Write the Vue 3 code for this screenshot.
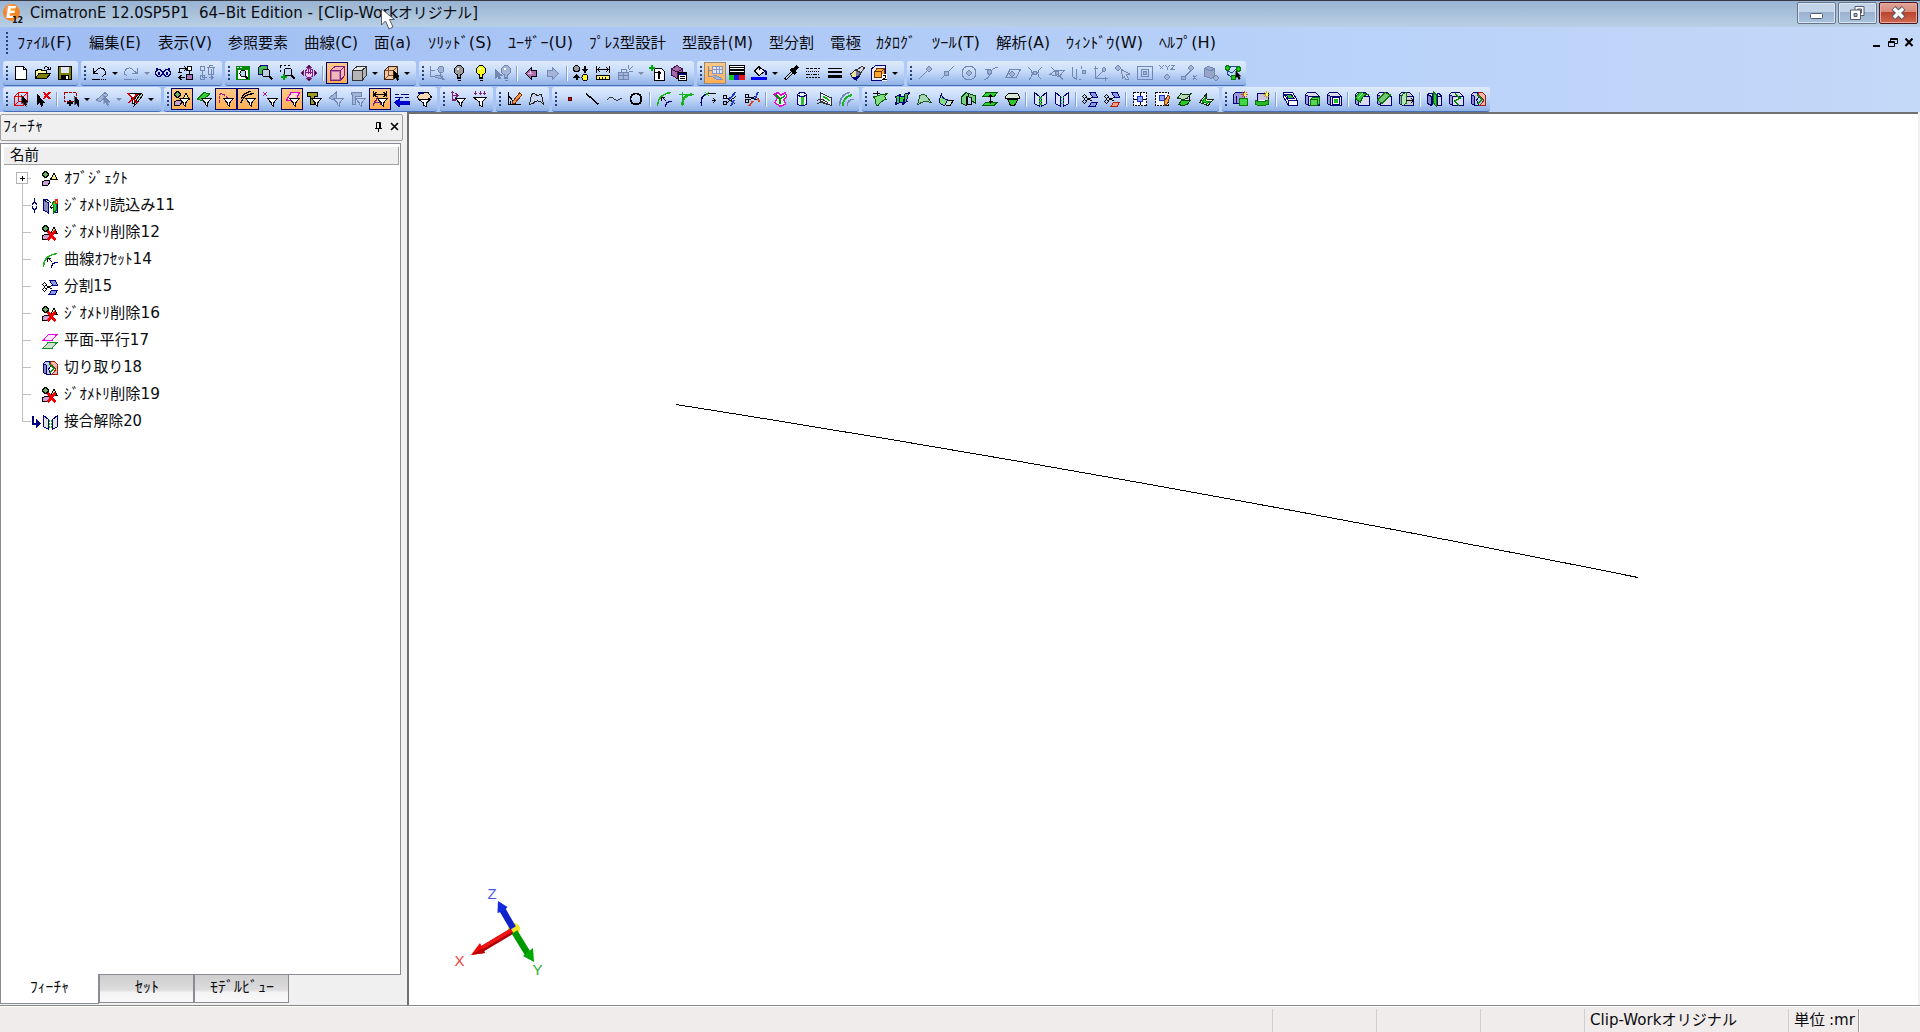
<script setup>
const P = (d, s = '#000', f = 'none', w = 1) => `<path d="${d}" stroke="${s}" fill="${f}" stroke-width="${w}"/>`
const R = (x, y, w, h, f, s = 'none') => `<rect x="${x}" y="${y}" width="${w}" height="${h}" fill="${f}" stroke="${s}"/>`
const C = (x, y, r, f = 'none', s = '#000', w = 1) => `<circle cx="${x}" cy="${y}" r="${r}" fill="${f}" stroke="${s}" stroke-width="${w}"/>`
const N = '#00007c', G = '#18b41c', L = '#7fe07f', K = '#000', M = '#7d1f7d', D = '#7288b4', E = '#a3b4d6', B = '#8a9be0'

const funnel = P('M5.500 7.500H15.500L11.500 12V15.500L9.500 13.500V12Z', K, '#fff')
const dimFunnel = P('M5.500 7.500H15.500L11.500 12V15.500L9.500 13.500V12Z', D, '#c3d2ee')
const pointer = P('M8.500 4V13L10.500 11L12.500 15L14 14L12.500 11H15Z', K, K, 0.5)
const scissor = (c1, c2) => C(2.5, 5.5, 1.8) + C(2.5, 10.500, 1.8) + P('M4 6.500L10 10M4 9.500L10 6.500') +
  P('M7.500 1.500H13L15.500 6H10.500Z', N, c1) + P('M7 15.500L9.500 11.500H15.500L13 15.500Z', c2 === B ? N : '#b02010', c2)
const ortho = (a = '#dcdcec') => P('M1.500 3.500V12.500L4.500 14.500V5.500Z', N, '#9a9ed4') + P('M1.500 3.500L3.500 1.500H11.500L15.500 5.500V14.500H4.500V5.500Z', N, a) + P('M1.500 3.500L4.500 5.500H15.500', N)
const bulb = (f, s = K) => C(8, 5.5, 4.8, f, s) + P('M6.500 10V13.500H9.500V10M6.500 12H9.500M7 15.500H9.500', s, f) + R(6, 3, 2, 2, '#fff')
const shapes = C(3.5, 3.5, 2.8, '#69b35c') + P('M8.500 8.500L12 2.500L15.500 8.500Z', K, '#f5ea7a') + P('M.500 13.500V11L2.500 9.500H7.500V12L5.500 14.500H.500Z', K, '#c9a0d8')
const sheet = (x, f = '#dfe4f4') => P(`M${x} 1.500L${x + 5} 5.500V15.500L${x} 12.500Z`, N, f)
const sheetR = (x, f = '#dfe4f4') => P(`M${x + 5} 1.500L${x} 5.500V15.500L${x + 5} 12.500Z`, N, f)

const icons = {
  new: P('M2.500 1.500H10.500L13.500 4.500V14.500H2.500ZM10.500 1.500V4.500H13.500', K, '#fff'),
  open: P('M.500 13.500V5.500H2L3 4.500H6L7 5.500H11.500V8', K, '#fffba0') + P('M.500 13.500L4 8.500H15.500L11.500 13.500Z', K, '#808000') + P('M9 3.500C10 1 13 1 14.500 4.500M12 4.500H15V2'),
  save: R(1.5, 1.5, 13, 13, '#808000', K) + R(4, 2, 8, 6, '#dfe8f8') + R(4, 10, 8, 5, K) + R(9, 11, 2, 3, '#fff'),
  undo: P('M2 3V8.500H7M2.500 8L7 4C10 1.500 15 4 14.500 9L11.500 11.500') + P('M1 14.500H9') + P('M10 14.500H16').replace('/>', ' stroke-dasharray="1 1"/>'),
  redo: P('M14 3V8.500H9M13.500 8L9 4C6 1.500 1 4 1.500 9L4.500 11.500', D) + P('M1 14.500H9', D) + P('M10 14.500H16', D).replace('/>', ' stroke-dasharray="1 1"/>'),
  glasses: C(4, 8, 3.4, '#c9d6f4', N, 1.2) + C(12, 8, 3.4, '#c9d6f4', N, 1.2) + P('M1 5Q1 3 3 3.500M15 5Q15 3 13 3.500', N) + R(3, 7, 2, 3, N) + R(11, 7, 2, 3, N),
  sync: P('M2.500 8V3.500H9M7 1L9.500 3.500L7 6M1 7H5M9.500 3.500V6M2.500 12.500H8M4.500 10L2 12.500L4.500 15') + R(9.5, 9.5, 6, 5, '#b070b8', K) + R(10.5, 1.5, 4, 4, '#fff', K) + P('M12.500 6V9'),
  treedel: P('M1.500 1.500H5.500V5.500H1.500ZM3.500 6V12.500H8M1.500 10.500H5.500V14.500H1.500ZM9.500 12.500H14M12 10.500L14 12.500L12 14.500M8 2.500H16M10.500 2V.500H13.500M9.500 3V9.500H14.500V3M12 4V9', D),
  fit: R(1, 1, 14, 14, '#00890a') + R(3, 4.500, 10, 9.500, '#fff') + R(2, 2, 2, 1, '#fff') + R(5, 2, 2, 1, '#fff') + C(8, 8.500, 3, '#b9d8f0', K) + P('M10 11L13 14', K, 'none', 1.5),
  zoomwin: P('M1.500 2.500L4 .500H10.500V7L8 9.500H1.500Z', N, '#40c048') + C(9, 8, 4, '#b8cfe8', K) + P('M12 11L15.500 14.500', K, 'none', 2),
  zoomin: P('M1 .500H12M1.500 1V8', K).replace('/>', ' stroke-dasharray="2 2"/>') + C(9, 7, 4, '#c3d6f4', K) + P('M12 10L15.500 14', K, 'none', 2) + P('M5 9V15M2 12H8', '#00a010', 'none', 2),
  pan: P('M8 0L10.500 2.500H5.500ZM8 16L10.500 13.500H5.500ZM0 8L2.500 5.500V10.500ZM16 8L13.500 5.500V10.500Z', M, K) + P('M5.500 5Q5.500 3.500 8 3.500Q11.500 3.500 11.500 6V10.500Q11 12.500 8 12.500Q5 12.500 4.500 10V6Z', M, '#f7c6f0') + P('M7 4V9M9 4V9M5 7H11', M),
  cubeA: P('M1.500 5.500L6 1.500H15.500V10.500L11.500 15.500H1.500Z', M, '#f0b8b8') + P('M1.500 5.500H11.500V15M11.500 5.500L15.500 1.500', M) + P('M2.500 6.500H10.500V14.500H2.500Z', '#b878a8'),
  cubeG: P('M1.500 5.500L6 1.500H15.500V10.500L11 15.500H1.500Z', '#333', '#b5b5b5') + P('M1.500 5.500L6 1.500H15.500L11 5.500Z', '#333', '#e8e8e8') + P('M11.500 5.500V15', '#333'),
  cubeP: P('M1.500 5.500L5.500 1.500H14.500V10.500L10.500 14.500H1.500Z', '#402010', '#efc8a2') + P('M1.500 5.500H10.500V14.500M10.500 5.500L14.500 1.500M5.500 2V10.500H14M5.500 10.500L1.500 14.500', '#804828') + `<g transform="translate(2 1)">${pointer}</g>`,
  treehide: P('M1.500 1V11.500H6M1.500 5.500H6', D) + C(12, 4.5, 3, E, D) + P('M11 8V11H14M5 11.500Q10 8 15 14.500L9 13Z', D, E),
  bulbOff: bulb('#9a9a9a'), bulbOn: bulb('#ffff1c'),
  bulbPick: `<g transform="translate(3 0)">${bulb(E, D)}</g>` + P('M.500 5V13L2.500 11L4 14L5.500 13L4.500 10.500H7Z', D, D),
  left: P('M2.500 8.500L8.500 2.500V5.500H13.500V11.500H8.500V14.500Z', K, '#b070b0') + P('M5 8.500H9M7.500 6V8', '#f0c8e8'),
  right: P('M13.500 8.500L7.500 2.500V5.500H2.500V11.500H7.500V14.500Z', D, E),
  swap: C(3.5, 3.5, 3, '#999') + C(12, 12.5, 3, '#ffff20') + P('M12 1V4M3.500 15V12', K, 'none', 2) + P('M9.500 4.500H14.500L12 7.500ZM1 12.500H6L3.500 9.500Z', K, K),
  measure: P('M1.500 1V8M14.500 1V8M2 4.500H14M5 2L2.500 4.500L5 7M11 2L13.500 4.500L11 7') + R(1.5, 10.5, 13, 4, '#fff36a', K) + P('M4.500 12V14M7.500 12V14M10.500 12V14'),
  explode: R(1.5, 7.5, 10, 7, E, D) + P('M1.500 10.500H11.500M6.500 7V14M4 7V4.500H9V7M11 4L12 0M12 5L16 1M12 6.500H16', D),
  docadd: P('M5.500 3.500H12.500L15.500 6.500V15.500H5.500Z', K, '#fff') + R(9, 6, 2, 8, K) + P('M6 7.500H11L12 9', K, K) + P('M3 0V6M0 3H6', '#00a010', 'none', 2),
  cubelist: P('M.500 4L6 .500L11.500 4V10L6 13.500L.500 10Z', '#401040', '#a468ac') + P('M.500 4L6 7L11.500 4M6 7V13', '#401040') + R(7.5, 7.5, 8, 8, '#fff', K) + P('M9 11.500H14M9 13.500H14') + R(8, 8, 7, 2, N),
  treetable: P('M1.500 1V11.500H6M1.500 5.500H5', '#8d8490') + P('M5.500 1.500H15.500V8.500H5.500ZM5.500 4.500H15.500M9 2V8M12 2V8', '#8796c2', '#dfe4f5') + P('M5 11.500Q9 8.500 15 14.500L9 14Z', '#8796c2', '#a5b2d8'),
  lines: R(.5, .5, 15, 9, '#fff', K) + R(1, 2, 14, 1, K) + R(1, 4, 14, 2, K) + R(1, 7, 14, 2, K) + R(0, 10, 5, 5, '#18c818') + R(5, 10, 5, 5, '#1717e8') + R(10, 10, 6, 5, '#e81818'),
  bucket: P('M3.500 6L8 1.500L13.500 6.500L8 10.500Z', K, '#f2f2f6') + P('M8 1V5', K) + P('M12 5Q15.500 6 15 10', N, 'none', 2) + R(0, 12, 16, 3, '#0000f8'),
  dropper: P('M2 14.500L10 6.500', K, 'none', 3) + P('M3 13.500L9 7.500', '#b8d8f0') + P('M8 4L13 9M10 6L14.500 1.500', K, 'none', 3),
  dash: P('M1 3.500H15', K).replace('/>', ' stroke-dasharray="3 1"/>') + P('M1 6.500H15', K).replace('/>', ' stroke-dasharray="1 1"/>') + P('M1 9.500H15', K).replace('/>', ' stroke-dasharray="4 1 1 1"/>') + P('M1 12.500H15', K).replace('/>', ' stroke-dasharray="2 1"/>'),
  weight: R(1, 3, 14, 1, K) + R(1, 6, 14, 2, K) + R(1, 10, 14, 3, K),
  brush: P('M1.500 9L7 4.500L12 9L7.500 15Q3 14 1.500 9', '#333', '#ece19a') + P('M7 12L12 9L7 4.500', '#333', '#777ba0') + P('M8 5L13 1L15.500 3L11.500 8Z', '#333', '#d8d8e0') + P('M3 12L7 15L11 11', N, N),
  layer: P('M.500 4L4.500 .500H14.500V11L11 15.500H.500Z', N, '#e8ecff') + P('M3.500 6.500L6 3.500H13.500V9.500L11 12.500H3.500Z', '#6d3500', '#ffa92e') + P('M3.500 6.500H10.500V12M10.500 6.500L13.500 3.500', '#6d3500') + R(11, 9, 5, 7, '#fff') + P('M11.500 10.500H14.500V12.500L12 14.500H15.500', K),
  sEnd: P('M1.500 14.500L10 6', D) + C(12, 4, 2.3, E, D), sMid: P('M1.500 14.500L14.500 1.500', D) + C(7.5, 8.5, 2.3, E, D),
  sCen: C(8, 8, 7, 'none', D) + C(8, 8, 2.2, E, D), sTan: P('M1 14.500Q6 14 7 8Q9 3 15 2.500', D) + C(6.500, 7, 2.2, E, D) + P('M2 4.500H8', D),
  sPl: P('M1 12.500L5 4.500H15.500L11 12.500Z', D) + C(7, 9, 2.2, E, D), sInt: P('M1 2Q9 8 2 14.500M15 2Q7 8 14.500 14.500', D) + C(8, 8, 2, E, D),
  sPier: P('M1 9.500L6 5.500H15.500L10 11.500Z M2 2L14 14.500', D) + C(8, 8, 2, E, D), sLoc: P('M1.500 1.500V11.500L5.500 14.500V3.500M8 14.500H10', D) + C(13, 7, 2, E, D) + P('M10 1V4', D),
  sAx: P('M2.500 1V13.500H15M2.500 13.500L11 5M.500 3.500H4.500M12.500 11.500V15.500', D) + C(11, 4.5, 1.8, E, D), sPick: C(3, 3, 2.2, E, D) + P('M6.500 4.500L14.500 9L11.500 10L13.500 14L11 15L9.500 11.500L7.500 13Z', D, '#c4d2ee'),
  sBox: R(.5, 1.5, 15, 13, 'none', D) + R(4.5, 4.5, 7, 7, 'none', D) + C(8, 8, 1.7, E, D),
  sXyz: P('M.500 .500L4.500 4.500M4.500 .500L.500 4.500M6.500 .500L8.500 2.500L10.500 .500M8.500 2.500V5M12 .500H15.500L12 4.500H16', D) + C(8, 12, 2.2, E, D),
  sPct: P('M2 13.500L12 3.500M12 10L15.500 15M15.500 10L12 15', D) + C(10, 3, 2.2, E, D) + C(2.5, 13, 2, E, D), sSol: P('M1.500 3.500L5 1.500L11.500 3.500V11L8 13.500L1.500 11Z', D, '#96a5c8') + P('M1.500 3.500L8 6L11.500 3.500', D) + C(13, 13, 2.2, E, D),
  snapAll: P('M3 6Q1 9 5 11L8 12M4 3Q9 -1 13 3M3 6L7 8L12 3', '#174fa8') + C(2.5, 3, 2.2, '#20c820', '#087808') + C(13.5, 4, 2.2, '#20c820', '#087808') + C(8.5, 12.5, 2.2, '#20c820', '#087808') + `<g transform="translate(4 2.5) scale(.8)">${pointer}</g>`,

  selbox: P('M1.500 5.500L5.500 1.500H14.500V10.500L10.500 14.500H1.500ZM1.500 5.500H10.500V14.500M10.500 5.500L14.500 1.500M5.500 2V10.500L1.500 14.500M5.500 10.500H14', '#e80000') + pointer,
  desel: P('M2.500 4V13L4.500 11L6.500 15L8 14L6.500 11H9Z', K, K) + P('M8.500 1L15 8M15 1L8.500 8', '#e80000', 'none', 2),
  marquee: P('M1.500 1.500H13.500V10.500H1.500Z', '#a00000').replace('/>', ' stroke-dasharray="3 1"/>') + P('M7 9V15M4 12H10', K, 'none', 2) + `<g transform="translate(3 1)">${pointer}</g>`,
  dimpick: P('M1.500 9L10 1.500L13 4L5 11Z', D, E) + pointer.replaceAll(K, D),
  nofilter: P('M1 2.500H12L7.500 8V13L5.500 12V8Z', K, '#fff') + P('M14 2L16 4L9 13L7 15L7.500 12Z', K, '#b8d8b8') + P('M1 2L10 12M10 3L2 12', '#d00000', 'none', 1.6),
  fObj: shapes + funnel,
  fFace: P('M1.500 8L8 1.500L13.500 3L6 10Z', '#087808', '#35d035') + funnel, fCurve: P('M1.500 12V3.500Q4 1 7.500 5.500L14 10', '#a02090', 'none', 1.4).replace('/>', ' stroke-dasharray="3 1"/>') + funnel,
  fEdge: P('M1 12Q4 3 14 2.500M1 8Q4 1 11 .500', K, 'none', 1.3) + funnel,
  fPoint: P('M1 1L5 5M5 1L1 5', '#a02090') + funnel, fPlane: P('M2.500 9.500L7 1.500H15.500L12 9.500Z', '#e000d0', '#ffe0d0', 1.3) + funnel,
  fText: P('M1.500 1.500H11.500V5.500H8.500V13.500H4.500V5.500H1.500Z', K, '#9c9c20') + funnel, fDimA: P('M1 7L8 1.500V10Z', D, E) + dimFunnel, fDimB: P('M1.500 1.500H11.500V5.500H5.500V13.500H2.500V5.500Z', D, E) + dimFunnel,
  fMeas: P('M1.500 0V6M14.500 0V6M2 3.500H14M4.500 1L2 3.500L4.500 6M11.500 1L14 3.500L11.500 6') + P('M1 14.500L5.500 6.500L9 14M3 11.500H8', M, 'none', 1.4) + funnel,
  fLayer: P('M1 3.500H5M7 3.500H15M1 6.500H9M11 6.500H15', N, 'none', 1.5) + P('M.500 11.500L5 8V10H15.500V13.500H5V15.500Z', '#0000c0', '#0000d8'),
  fHand: P('M1.500 5.500L5 1.500H12L15.500 6L12 8H6L3 9Z', K, '#f8d8b0') + P('M3 8.500H14L10 12.500V15.500L7.500 14V12Z', K, '#fff') + P('M2 2H8', N, 'none', 1.5),
  fTree: P('M2.500 1V9H6M2.500 4.500H7M.500 2.500L2.500 .500L4.500 2.500M5 2L8 4.500L5 7', M, 'none', 1.3) + funnel,
  fRain: P('M3.500 0V4M8.500 0V4M12.500 0V4M2 2.500H5M7 2.500H10M11 2.500H14', M) + P('M1.500 6.500H14.500L10 11V15.500L7.500 14V11Z', K, '#fff'),
  sketch: P('M2.500 1V13.500H15M2.500 5L10.500 13.500M4.500 9.500V13', K) + P('M7 10L13.500 2L16 4L9 12L6.500 12.500Z', '#803010', '#f29a42'),
  curve3: P('M1.500 13.500L3.500 4Q6 1 9 4.500L13.500 3.500L15.500 13Q9 7 5 12.500Z', '#222', '#c6d6f0'),
  point: R(6, 6, 4, 4, '#500000') + R(7, 7, 2, 2, '#e00000'), line: P('M2 2.500L14.500 13.500', K, 'none', 1.5), spline: P('M.500 9.500Q4 4 8 8Q11 11 15.500 7', '#333'), circle: C(8, 8, 5.5, 'none', K, 1.8),
  offset: P('M1.500 15Q2 3 15.500 1.500', G, 'none', 1.5) + P('M9.500 15.500Q9.500 10.500 15.500 10.500', N, 'none', 1.4) + P('M10.500 10.500L6 6M5.500 9.500V6.500H9'),
  fillet: P('M1 3.500H16M4.500 1V15', G) + P('M4.500 14Q4 4 14 3.500', G, 'none', 2.4), extend: P('M1.500 15Q0 4 7 3', N, 'none', 1.5) + P('M7 2.500H16M12 9.500H15M13 7L15.500 9.500L13 12', K) + P('M5 1L9 5M9 1L5 5', G),
  trim: C(3, 6, 2) + C(3, 12, 2) + P('M5 7L13 12.500M5 11.500L14 5.500') + P('M13 1Q11 6 7 8M12 9L9 15', '#183fd0', 'none', 1.8), split: C(3, 5, 2) + C(3, 10, 2) + P('M5 6L13 9M5 9L12 5') + P('M14 1L11 8', '#183fd0', 'none', 1.8) + P('M9 10L5 15M14 7L15 11', '#e04020', 'none', 1.8),
  comp: P('M2 3.500L6 1.500L9 4L13 2L15 5L12 9L13.500 13L8 15.500L3 11.500L5 7Z', '#e010d0', '#ddffdd', 1.4) + P('M4 4L8 8V13M8 8L13 5', '#009010', 'none', 1.5), cyl: P('M3.500 3.500Q8 -1 12.500 3.500V13Q8 17 3.500 13Z', N, '#eef4ff') + R(7, 5, 3, 9, '#29c42d') + P('M3.500 4Q8 7 12.500 4', N),
  proj: P('M4.500 2L15.500 7V14.500L4.500 10Z', '#333', '#e8eefc') + P('M1 9.500Q5 6 12 12M1 13Q6 10 12 14', '#333') + P('M7 6Q10 6 13 10', '#10b010', 'none', 1.5), par: P('M1.500 15Q2 3 12 1.500', D, 'none', 1.5) + P('M5 15Q5 6 14 4', G, 'none', 2) + P('M9.500 15Q9 9 15.500 8', D, 'none', 1.5),
  sf1: P('M1.500 6L8 4L15 2.500Q11 6 14.500 8.500Q10 9 6 14.500Q3 14 4 11Q4 8 1.500 6', '#0a5c0a', L) + P('M1 2H8M5 0V4'), sf2: P('M1.500 5.500Q4 5 6.500 3.500Q5 8 6 11.500L1.500 13.500Q3 9 1.500 5.500ZM6 5H10V11H6M10 3.500L15.500 1.500Q12 7 13 10.500L8 14Q11 9 10 3.500', N, '#35d035'),
  sf3: P('M1.500 14L4 4.500Q8 2 10.500 5L15.500 12Q9 8 1.500 14', '#20552c', '#a6d8b0'), sf4: P('M3.500 2.500Q4 8 9.500 9L7 14.500Q0 13 1.500 9Z', N, L) + P('M10 9L15.500 9.500L12 14.500H7.500', K, '#c5e6d5'),
  sf5: P('M1.500 6L6 1.500L15.500 5V12L11.500 10V7L6 5V14.500L1.500 12Z', '#0a400a', '#79cf80') + P('M6 5.500V14.500M8.500 3L7 13H11V7', K), sf6: P('M1 5.500L4 1.500H15.500L12 5.500ZM1 14.500L4 11H15.500L12 14.500Z', '#075c07', '#2fd02f') + P('M8.500 4V13M6.500 6L8.500 4L10.500 6M6.500 10H10.500'),
  sf7: P('M1.500 5.500L4.500 2.500H13.500L15.500 5.500V7.500H1.500Z', K, '#d5e8d5') + P('M3.500 8L6.500 14.500H10.500L14 8Z', K, '#28c828'),
  join1: sheet(2.5) + sheetR(9.5) + P('M8.500 6V15', G, 'none', 3).replace('/>', ' stroke-dasharray="2 1"/>'), join2: sheet(1.5) + sheetR(9.5) + P('M7.500 6V15M9.500 6V15', G).replace('/>', ' stroke-dasharray="1 2"/>'),
  cutB: scissor(B, B), cutR: scissor(B, '#ff9c80'),
  frame1: P('M1.500 1.500H14.500V14.500H1.500Z', K, '#f8fbff').replace('/>', ' stroke-dasharray="2 1"/>') + P('M8 2V14M2 8H14', K) + R(5.5, 5.5, 5, 5, '#91a6ff', '#1a30c8'), frame2: P('M1.500 1.500H14.500V14.500H1.500Z', K, '#f8fbff').replace('/>', ' stroke-dasharray="2 1"/>') + R(5.5, 4.5, 5, 5, '#91a6ff', '#1a30c8') + P('M10 15V11L14 4L16 6L13 13Z', '#803010', '#f5a840'),
  sf8: P('M1.500 7L5 2.500Q9 5 14.500 3L11 7.500Q6 9 1.500 7', '#0a400a', '#b8d8b8') + P('M2.500 13.500L6 9Q10 11 15 9L11 13.500Q7 15 2.500 13.500', '#0a400a', '#28c828') + P('M13.500 5V9'), sf9: P('M1.500 11.500L8.500 2.500V8L15.500 8.500L10 14.500Z', '#142814', '#e9f4e9') + P('M4 11L7.500 6V10L12 10.500L9.500 12.500Z', '#0a800a', '#28c828'),
  newsol: P('M1.500 3.500L3.500 1.500H12V12H1.500ZM4.500 5V12.500', N, '#9e98d8') + R(7.5, 7.5, 8, 7, '#40d840', '#087808') + P('M12.500 0V7M9 3.500H16M10 1L15 6M15 1L10 6', '#d83000', 'none', 0.8) + R(12, 2, 2, 3, '#ffff40'), newrev: P('M3 2.500H14.500V12H3Z', N, '#c9c2e0') + P('M1 9.500Q8 12 14.500 9V13Q7 17 1 13Z', '#087808', '#28b828') + P('M5 9H11', '#fff') + P('M12.500 0V7M9 3.500H16M10 1L15 6M15 1L10 6', '#b89800', 'none', 0.8) + R(12, 2, 2, 3, '#ffff40'),
  b1: P('M1.500 1.500H10.500L15.500 9.500V14.500H6.500L1.500 6Z', N, '#fff') + P('M3.500 3H9L12 7.500H6.500Z', N, '#28c828') + P('M1.500 2.500L6.500 9.500H15.500M6.500 9.500V14.500', N), b2: ortho() + P('M6.500 8.500L8.500 6.500H15.500V12.500L13.500 14.500H6.500Z', '#0a680a', '#54d854') + P('M6.500 8.500H13.500V14', '#0a680a'), b3: ortho() + R(6.5, 6.500, 7, 7, '#fff', N) + R(8, 8, 4, 4, '#20b820'),
  r1: ortho() + P('M1.500 7Q3 2 7 1.500L13 3.500Q8 5 6.500 11Q3 10 1.500 7', '#0a680a', '#35c435') + P('M4 7L9 2', '#a8f0a8'), r2: ortho() + P('M1.500 9L9 1.500L14.500 4L6 12.500Z', '#087808', '#74c574'), r3: ortho('#ccc') + P('M3.500 13V5Q5 2 8.500 1.500V12L5 14.500', '#087808', '#b8e0b8') + P('M8 9.500H15M13 7L15.500 9.500L13 12'),
  c1: P('M1.500 3.500L5.500 5.500V14.500L1.500 12.500Z', N, '#8a8ac8') + R(11.500, 5.500, 4, 9, '#d8d8e8', N) + P('M7.500 1L10.500 4V15.500L7.500 12Z', '#087808', '#28c828') + P('M1.500 3.500L3 2.500H6.500V14M11 5V2.500H13L15.500 5', N), c2: ortho() + P('M7 3L12 7L7 10L11 14.500', '#008a00', 'none', 1.5),
  c3: P('M1.500 3.500L3.500 1.500H7.500L9 6L6.500 9L9 14.500H4.500L1.500 12.500Z', N, '#c8ccec') + P('M1.500 3.500L4.500 5.500V14.500L1.500 12.500Z', N, '#8888c8') + P('M8.500 1.500H12.500L15.500 4.500V14.500H10L14 9L8.500 4Z', '#a02018', '#f4b8aa') + P('M7 3.500L12 8.500L7.500 13.500', '#009000', 'none', 1.4),
  objs: shapes, del: shapes + P('M5.500 6L13.500 15M13.500 6L5.500 15', '#f00000', 'none', 3),
  read: P('M1.500 1.500L6.500 5V15L1.500 12Z', N, '#8a8fc0') + P('M2 1.500H5L9 5', N) + R(12.5, 5.5, 3, 9, '#c8c8e0', N) + P('M9 9H13M10.500 6.500L8 9L10.500 11.500') + P('M10.500 5L14.500 1.500V12L11.500 15V9Z', '#087808', '#30c830') + R(13, 1, 3, 5, '#f02020') + R(14, 3, 1, 2, '#ffe000'),
  planes: P('M1 7.500L6.500 1.500H15L10 7.500Z', '#f000e8', '#ffe8fb') + P('M1 15.500L6 9.500H15L10 15.500Z', '#089020', '#d5dcd5'),
  unjoin: sheet(1.5, '#e4e4e4') + sheetR(10.5, '#e4e4e4') + P('M7.500 6V15M9.500 6V15', '#00b000').replace('/>', ' stroke-dasharray="2 1"/>')
}

// '|' is a separator, 'v' a drop-down arrow, '*' marks a pressed button, '~' a dimmed one
const bars = [
  [
    { w: 75, items: 'new open save' },
    { w: 141, items: 'undo v redo ~v glasses sync treedel' },
    { w: 191, items: 'fit zoomwin zoomin pan | *cubeA cubeG v cubeP v' },
    { w: 275, items: 'treehide bulbOff bulbOn bulbPick | left right | swap measure explode ~v docadd cubelist' },
    { w: 207, items: '*treetable lines bucket v dropper dash weight brush layer v' },
    { w: 339, items: 'sEnd sMid sCen sTan sPl sInt sPier sLoc sAx sPick sBox sXyz sPct sSol snapAll' }
  ],
  [
    { w: 158, items: 'selbox desel | marquee v dimpick ~v nofilter v' },
    { w: 273, items: '*fObj fFace *fCurve *fEdge fPoint *fPlane fText fDimA fDimB *fMeas fLayer fHand' },
    { w: 53, items: 'fTree fRain' },
    { w: 53, items: 'sketch curve3' },
    { w: 307, items: 'point line spline circle | offset fillet extend trim split | comp cyl proj par' },
    { w: 357, items: 'sf1 sf2 sf3 sf4 sf5 sf6 sf7 | join1 join2 | cutB cutR | frame1 frame2 sf8 sf9' },
    { w: 268, items: 'newsol newrev | b1 b2 b3 | r1 r2 r3 | c1 c2 c3' }
  ]
].map(row => row.map(g => ({ w: g.w, items: g.items.split(' ') })))

const bare = t => t.replace(/^[*~]/, '')

const menuRaw = [
  ['ﾌｧｲﾙ(F)', 17, 55], ['編集(E)', 89, 52], ['表示(V)', 158, 54], ['参照要素', 228, 60], ['曲線(C)', 304, 54], ['面(a)', 374, 37],
  ['ｿﾘｯﾄﾞ(S)', 428, 64], ['ﾕｰｻﾞｰ(U)', 508, 65], ['ﾌﾟﾚｽ型設計', 589, 77], ['型設計(M)', 682, 71], ['型分割', 769, 45], ['電極', 830, 31],
  ['ｶﾀﾛｸﾞ', 876, 40], ['ﾂｰﾙ(T)', 932, 48], ['解析(A)', 996, 54], ['ｳｨﾝﾄﾞｳ(W)', 1066, 77], ['ﾍﾙﾌﾟ(H)', 1159, 57]
]
const menus = menuRaw.map((m, i) => ({ t: m[0], len: m[2], w: (menuRaw[i + 1]?.[1] ?? 1230) - m[1] }))

const tree = [
  { t: 'ｵﾌﾞｼﾞｪｸﾄ', w: 64, i: 'objs', kind: 'root' },
  { t: 'ｼﾞｵﾒﾄﾘ読込み11', w: 111, i: 'read', kind: 'mark' },
  { t: 'ｼﾞｵﾒﾄﾘ削除12', w: 96, i: 'del' },
  { t: '曲線ｵﾌｾｯﾄ14', w: 88, i: 'offset' },
  { t: '分割15', w: 48, i: 'cutB' },
  { t: 'ｼﾞｵﾒﾄﾘ削除16', w: 96, i: 'del' },
  { t: '平面-平行17', w: 85, i: 'planes' },
  { t: '切り取り18', w: 78, i: 'c3' },
  { t: 'ｼﾞｵﾒﾄﾘ削除19', w: 96, i: 'del' },
  { t: '接合解除20', w: 78, i: 'unjoin', kind: 'last' }
]
const cells = [1273, 104, 104, 104]
</script>

<template>
  <div class="app">
    <header class="title">
      <svg class="logo" width="20" height="21" viewBox="0 0 20 21">
        <circle cx="8.500" cy="9.500" r="8.500" fill="#ef8428" /><circle cx="7" cy="6" r="5" fill="#ffab56" opacity=".5" />
        <text x="3" y="15" font-size="15" font-weight="bold" font-style="italic" fill="#fff">E</text>
        <text x="9" y="20" font-size="8" font-weight="bold" fill="#111">12</text>
      </svg>
      <svg class="caption" width="460" height="26">
        <text x="0" y="17" textLength="159" lengthAdjust="spacingAndGlyphs">CimatronE 12.0SP5P1</text>
        <text x="169" y="17" textLength="114" lengthAdjust="spacingAndGlyphs">64–Bit Edition -</text>
        <text x="288" y="17" textLength="80" lengthAdjust="spacingAndGlyphs">[Clip-Work</text>
        <text x="368" y="17" textLength="80" lengthAdjust="spacingAndGlyphs">オリジナル]</text>
      </svg>
      <div class="winbtns">
        <span class="wb"><svg width="37" height="20"><rect x="12.500" y="10.500" width="12" height="5" rx="1" fill="#fff" stroke="#565a6c" /></svg></span>
        <span class="wb"><svg width="37" height="20"><path d="M16 3.500h9v9h-9z" fill="#fff" stroke="#565a6c" /><path d="M18.500 6h4v4h-4z" fill="#9cb4d2" stroke="#565a6c" /><path d="M11.500 7h10v9.500h-10z" fill="#fff" stroke="#565a6c" /><path d="M15 10.500h3v3h-3z" fill="#9cb4d2" stroke="#565a6c" /></svg></span>
        <span class="wb close"><svg width="37" height="20"><path d="M13.500 5l10 10M23.500 5l-10 10" stroke="#565a6c" stroke-width="5.500" /><path d="M14 5.500l9 9M23 5.500l-9 9" stroke="#fff" stroke-width="3.500" /></svg></span>
      </div>
    </header>

    <section class="bars">
      <nav class="menu">
        <span class="grip tall"></span>
        <svg v-for="m in menus" :key="m.t" :width="m.w" height="34" class="mi"><text x="0" y="21" :textLength="m.len" lengthAdjust="spacingAndGlyphs">{{ m.t }}</text></svg>
        <svg class="mdi" width="44" height="12">
          <path d="M1 7h7v2h-7z" />
          <path d="M18.500 4V.500h7v5h-2.500M18 1.500h8M16.500 3.500h6v5h-6zM16 4.500h7" fill="none" stroke="#000" />
          <path d="M33.500 .500l7 7.500M40.500 .500l-7 7.500" stroke="#000" stroke-width="2" />
        </svg>
      </nav>
      <div v-for="(row, r) in bars" :key="r" class="row">
        <div v-for="(g, k) in row" :key="k" class="group" :style="{ width: g.w + 'px' }">
          <span class="grip"></span>
          <template v-for="(it, n) in g.items" :key="n">
            <span v-if="it === '|'" class="sep"></span>
            <span v-else-if="bare(it) === 'v'" class="drop" :class="{ dim: it[0] === '~' }"></span>
            <span v-else class="btn" :class="{ on: it[0] === '*', soft: it === '*treetable' }">
              <svg width="16" height="16" viewBox="0 0 16 16" shape-rendering="crispEdges" v-html="icons[bare(it)]"></svg>
            </span>
          </template>
        </div>
      </div>
    </section>

    <main class="work">
      <aside class="side">
        <div class="ptitle">
          <svg width="360" height="24"><text x="2" y="16" textLength="40" lengthAdjust="spacingAndGlyphs">ﾌｨｰﾁｬ</text></svg>
          <svg class="pin" width="26" height="12"><path d="M1.500 7V1.500h4V7M4.500 1v6M0 7.500h7M3.500 8v3" fill="none" stroke="#000" /><path d="M16 2l7 7M23 2l-7 7" stroke="#000" stroke-width="1.600" /></svg>
        </div>
        <div class="tree">
          <div class="thead"><svg width="60" height="17"><text x="6" y="13" textLength="29" lengthAdjust="spacingAndGlyphs">名前</text></svg></div>
          <div v-for="(n, i) in tree" :key="i" class="node">
            <svg class="guide" width="40" height="27" shape-rendering="crispEdges">
              <path v-if="n.kind === 'root'" d="M27 13.500h3M21.500 19v8" stroke="#c0c0c0" />
              <path v-else-if="n.kind === 'last'" d="M21.500 0v13.500h8" fill="none" stroke="#c0c0c0" />
              <path v-else d="M21.500 0v27M22 13.500h8" stroke="#c0c0c0" />
              <g v-if="n.kind === 'root'"><rect x="15.500" y="7.500" width="11" height="11" fill="#fff" stroke="#b4b4b4" /><path d="M19 13.500h5M21.500 11v5" stroke="#000" /></g>
              <path v-if="n.kind === 'mark'" d="M33.500 6v4M31.500 13v-2h1v-1h2v1h1v2M31.500 14v2h1v1h2v-1h1v-2M33.500 17v4" fill="none" stroke="#00007c" />
              <g v-if="n.kind === 'last'" fill="#00007c"><path d="M31 8h2v7h3v2h-5z" /><path d="M35 11l5 5-5 4z" /></g>
            </svg>
            <svg class="nicon" width="16" height="16" viewBox="0 0 16 16" shape-rendering="crispEdges" v-html="icons[n.i]"></svg>
            <svg width="200" height="27"><text x="0" y="18" :textLength="n.w" lengthAdjust="spacingAndGlyphs">{{ n.t }}</text></svg>
          </div>
        </div>
        <div class="tabs">
          <div class="tab cur"><svg width="40" height="24"><text x="0" y="18" textLength="39" lengthAdjust="spacingAndGlyphs">ﾌｨｰﾁｬ</text></svg></div>
          <div class="tab"><svg width="24" height="24"><text x="0" y="17" textLength="24" lengthAdjust="spacingAndGlyphs">ｾｯﾄ</text></svg></div>
          <div class="tab"><svg width="64" height="24"><text x="0" y="17" textLength="64" lengthAdjust="spacingAndGlyphs">ﾓﾃﾞﾙﾋﾞｭｰ</text></svg></div>
        </div>
      </aside>
      <div class="canvas">
        <svg width="1508" height="889" viewBox="409 114 1508 889">
          <path d="M676 404.500Q1157 480.500 1638 577.500" fill="none" stroke="#000" shape-rendering="crispEdges" />
          <circle cx="514" cy="929" r="6" fill="#f2e62a" />
          <path d="M512 931L482 949" stroke="#a80000" stroke-width="6" /><path d="M511.500 930L481.500 948" stroke="#f01414" stroke-width="3.500" />
          <path d="M471 955L480 943L485 953Z" fill="#f00808" /><path d="M471 955L485 953L483 948Z" fill="#b80000" />
          <path d="M513 928L502 909" stroke="#1022c8" stroke-width="6.500" /><path d="M498 901L507.500 907L504 911L497.500 913Z" fill="#1428e0" />
          <path d="M514.500 932L528 954" stroke="#009800" stroke-width="6.500" /><path d="M534 962L523 956L533 948Z" fill="#00a800" />
          <g class="axis">
            <text x="487.500" y="899">Z</text><text x="454.500" y="966">X</text><text x="532.500" y="975">Y</text>
          </g>
        </svg>
      </div>
    </main>

    <footer class="status">
      <span v-for="(c, i) in cells" :key="i" class="sc" :style="{ width: c + 'px' }"></span>
      <span class="sc name"><svg width="160" height="24"><text x="5" y="16" textLength="147" lengthAdjust="spacingAndGlyphs">Clip-Workオリジナル</text></svg></span>
      <span class="sc unit"><svg width="69" height="24"><text x="5" y="16" textLength="31" lengthAdjust="spacingAndGlyphs">単位</text><text x="40" y="16" textLength="26" lengthAdjust="spacingAndGlyphs">:mr</text></svg></span>
    </footer>

    <svg class="cursor" width="16" height="24"><path d="M1.500 1v16l4-4 3.500 8 4-2-3.500-7.500h5z" fill="#fff" stroke="#555a66" /></svg>
  </div>
</template>

<style>
body { margin: 0; overflow: hidden; }
</style>

<style scoped>
.app { position: relative; width: 1920px; height: 1032px; display: flex; flex-direction: column; background: #f0f0f0; font-family: "DejaVu Sans", "Noto Sans CJK JP", sans-serif; font-size: 15px; overflow: hidden; }
svg { display: block; flex: none; }
text { fill: #0b0b10; white-space: pre; font-weight: 400; }
.logo text { fill: #fff; font-weight: 700; }
.logo text + text { fill: #111; }
.title { height: 27px; box-sizing: border-box; border-top: 1px solid #353a44; background: linear-gradient(#99b4d2, #b8cfe4); display: flex; flex: none; }
.logo { margin: 2px 0 0 3px; }
.caption { margin-left: 7px; }
.winbtns { margin-left: auto; display: flex; gap: 2px; padding: 1px 2px 0 0; }
.wb { box-sizing: border-box; width: 39px; height: 22px; border: 1px solid #66748c; border-radius: 2px; box-shadow: inset 0 0 0 1px #dbe6f3; background: linear-gradient(#c3d4e8 0 45%, #98b2d0 46%, #a9c3de); }
.close { border-color: #4a1420; box-shadow: inset 0 0 0 1px #eaaaa0; background: linear-gradient(#e0a094 0 5%, #d98a7c 45%, #b8442e 46%, #cf6a50); }
.bars { height: 85px; flex: none; background: linear-gradient(90deg, #9fbdf3, #b9d2f9 70%, #c4d8f8); }
.menu { height: 34px; display: flex; align-items: flex-start; }
.menu .grip { margin: 5px 9px 0 6px; }
.mdi { margin: 11px 4px 0 auto; }
.row { display: flex; gap: 3px; padding-left: 3px; height: 24px; margin-bottom: 2px; }
.group { box-sizing: border-box; height: 25px; flex: none; display: flex; align-items: center; border-radius: 3px; border-bottom: 1px solid #466fb5; background: linear-gradient(#dfebfd, #c6daf9 45%, #8fb1e6); }
.grip { flex: none; width: 2px; height: 14px; margin: 0 2px 0 3px; background: repeating-linear-gradient(#27407c 0 2px, transparent 2px 4px); }
.grip.tall { height: 22px; }
.btn { flex: none; width: 22px; height: 22px; box-sizing: border-box; padding: 3px; }
.btn.on { border: 1px solid #00006e; background: linear-gradient(#ffc987, #ffae55); padding: 2px; }
.btn.soft { border-color: #8f8a84; }
.sep { flex: none; width: 6px; height: 15px; box-sizing: border-box; background: linear-gradient(90deg, transparent 2px, #7f9fd6 2px 3px, #f6faff 3px 4px, transparent 4px); }
.drop { flex: none; width: 10px; height: 22px; display: flex; align-items: center; justify-content: center; }
.drop::after { content: ""; border: 3px solid transparent; border-top-color: #000; border-bottom: 0; }
.drop.dim::after { border-top-color: #7d8aa6; }
.work { flex: none; height: 894px; display: flex; border-bottom: 1px solid #858b85; box-sizing: border-box; }
.side { width: 407px; display: flex; flex-direction: column; padding-top: 2px; box-sizing: border-box; }
.ptitle { box-sizing: border-box; width: 403px; height: 27px; border: 1px solid #a0a0a0; border-radius: 2px; display: flex; align-items: flex-start; flex: none; }
.pin { margin: 6px 0 0 14px; }
.tree { box-sizing: border-box; width: 401px; height: 832px; margin-top: 2px; border: 1px solid #8b8b93; background: #fff; flex: none; }
.thead { width: 395px; height: 18px; margin: 3px 0 0 3px; box-sizing: border-box; background: #efefef; border-right: 1px solid #a0a0a0; border-bottom: 1px solid #a0a0a0; }
.node { height: 27px; display: flex; }
.nicon { margin: 6px 6px 0 1px; }
.tabs { display: flex; }
.tab { box-sizing: border-box; width: 95px; height: 28px; border: 1px solid #8b8b93; border-top: 0; background: linear-gradient(#cfcfcf, #dcdcdc 55%, #f4f4f4 65%, #f8f8f8); display: flex; justify-content: center; }
.tab.cur { width: 99px; height: 30px; background: #fff; margin-top: -1px; }
.canvas { box-sizing: border-box; width: 1511px; border: solid #707070; border-width: 2px 0 0 2px; background: #fff; }
.status { height: 26px; box-sizing: border-box; padding-top: 2px; border-top: 1px solid #fff; background: #f0eceb; display: flex; flex: none; }
.sc { box-sizing: border-box; border-right: 1px solid #d2cfce; flex: none; }
.name { width: 204px; }
.unit { width: 70px; border-right: 1px solid #999; box-shadow: 1px 0 #fff; }
.axis text { font: 15px "Liberation Sans", sans-serif; }
.axis text:nth-child(1) { fill: #4a5ae0; }
.axis text:nth-child(2) { fill: #f03c3c; }
.axis text:nth-child(3) { fill: #2fae2f; }
.cursor { position: absolute; left: 380px; top: 8px; }
</style>
